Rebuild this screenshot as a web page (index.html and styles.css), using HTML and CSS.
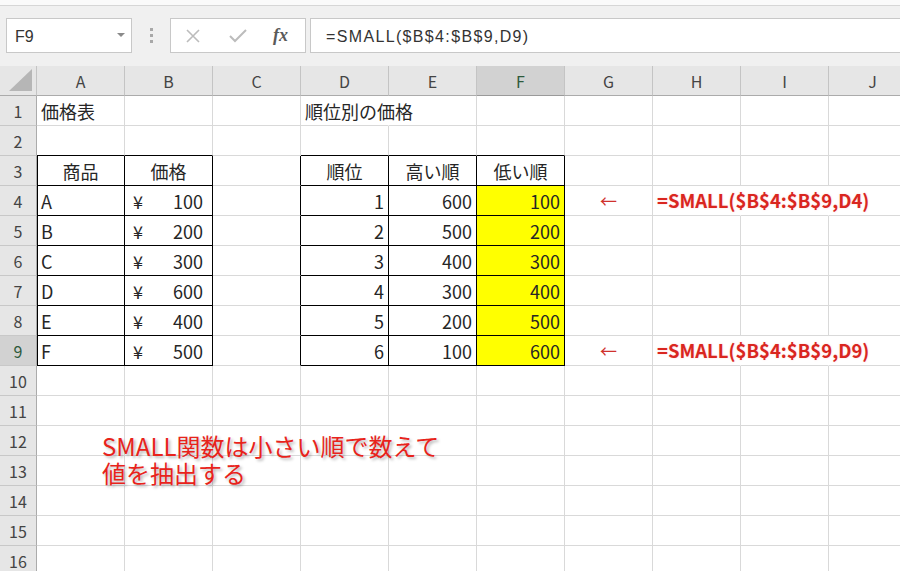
FILE: index.html
```html
<!DOCTYPE html>
<html lang="ja">
<head>
<meta charset="utf-8">
<title>SMALL関数</title>
<link rel="stylesheet" href="styles.css">
</head>
<body>
<div class="strip"></div>
<div class="toolbar">
  <div class="namebox"><span>F9</span><svg class="dd" width="8" height="5" viewBox="0 0 8 5"><path d="M0 0h8L4 4z" fill="#8a8a8a"/></svg></div>
  <div class="dots"><i></i><i></i><i></i></div>
  <div class="fbtns">
    <svg class="ico" width="16" height="14" viewBox="0 0 16 14"><path d="M2 1l12 12M14 1L2 13" stroke="#bcbcbc" stroke-width="1.6" fill="none"/></svg>
    <svg class="ico" width="18" height="14" viewBox="0 0 18 14"><path d="M1 7l5 5L17 1" stroke="#bcbcbc" stroke-width="2" fill="none"/></svg>
    <span class="fx">fx</span>
  </div>
  <div class="formula">=SMALL($B$4:$B$9,D9)</div>
</div>

<div class="sheet">
  <div class="r hdr">
    <div class="corner"><svg width="24" height="23" viewBox="0 0 24 23"><path d="M23 0V22H0z" fill="#b6b6b6"/></svg></div>
    <div class="hc">A</div><div class="hc">B</div><div class="hc">C</div><div class="hc">D</div><div class="hc">E</div><div class="hc sel">F</div><div class="hc">G</div><div class="hc">H</div><div class="hc">I</div><div class="hc">J</div>
  </div>
  <div class="r">
    <div class="rh">1</div>
    <div class="c">価格表</div><div class="c"></div><div class="c"></div><div class="c nr">順位別の価格</div><div class="c"></div><div class="c"></div><div class="c"></div><div class="c"></div><div class="c"></div><div class="c"></div>
  </div>
  <div class="r">
    <div class="rh">2</div>
    <div class="c bb"></div><div class="c bb"></div><div class="c"></div><div class="c bb"></div><div class="c bb"></div><div class="c bb"></div><div class="c"></div><div class="c"></div><div class="c"></div><div class="c"></div>
  </div>
  <div class="r">
    <div class="rh">3</div>
    <div class="c t tl ctr">商品</div><div class="c t ctr">価格</div><div class="c br"></div><div class="c t ctr">順位</div><div class="c t ctr">高い順</div><div class="c t ctr">低い順</div><div class="c"></div><div class="c"></div><div class="c"></div><div class="c"></div>
  </div>
  <div class="r">
    <div class="rh">4</div>
    <div class="c t tl">A</div><div class="c t yen"><span>¥</span><span>100</span></div><div class="c br"></div><div class="c t num">1</div><div class="c t num">600</div><div class="c t num yel">100</div><div class="c ctr arrow">←</div><div class="c nr red">=SMALL($B$4:$B$9,D4)</div><div class="c nr"></div><div class="c"></div>
  </div>
  <div class="r">
    <div class="rh">5</div>
    <div class="c t tl">B</div><div class="c t yen"><span>¥</span><span>200</span></div><div class="c br"></div><div class="c t num">2</div><div class="c t num">500</div><div class="c t num yel">200</div><div class="c"></div><div class="c"></div><div class="c"></div><div class="c"></div>
  </div>
  <div class="r">
    <div class="rh">6</div>
    <div class="c t tl">C</div><div class="c t yen"><span>¥</span><span>300</span></div><div class="c br"></div><div class="c t num">3</div><div class="c t num">400</div><div class="c t num yel">300</div><div class="c"></div><div class="c"></div><div class="c"></div><div class="c"></div>
  </div>
  <div class="r">
    <div class="rh">7</div>
    <div class="c t tl">D</div><div class="c t yen"><span>¥</span><span>600</span></div><div class="c br"></div><div class="c t num">4</div><div class="c t num">300</div><div class="c t num yel">400</div><div class="c"></div><div class="c"></div><div class="c"></div><div class="c"></div>
  </div>
  <div class="r">
    <div class="rh">8</div>
    <div class="c t tl">E</div><div class="c t yen"><span>¥</span><span>400</span></div><div class="c br"></div><div class="c t num">5</div><div class="c t num">200</div><div class="c t num yel">500</div><div class="c"></div><div class="c"></div><div class="c"></div><div class="c"></div>
  </div>
  <div class="r">
    <div class="rh sel">9</div>
    <div class="c t tl">F</div><div class="c t yen"><span>¥</span><span>500</span></div><div class="c br"></div><div class="c t num">6</div><div class="c t num">100</div><div class="c t num yel">600</div><div class="c ctr arrow">←</div><div class="c nr red">=SMALL($B$4:$B$9,D9)</div><div class="c nr"></div><div class="c"></div>
  </div>
  <div class="r"><div class="rh">10</div><div class="c"></div><div class="c"></div><div class="c"></div><div class="c"></div><div class="c"></div><div class="c"></div><div class="c"></div><div class="c"></div><div class="c"></div><div class="c"></div></div>
  <div class="r"><div class="rh">11</div><div class="c"></div><div class="c"></div><div class="c"></div><div class="c"></div><div class="c"></div><div class="c"></div><div class="c"></div><div class="c"></div><div class="c"></div><div class="c"></div></div>
  <div class="r"><div class="rh">12</div><div class="c"></div><div class="c"></div><div class="c"></div><div class="c"></div><div class="c"></div><div class="c"></div><div class="c"></div><div class="c"></div><div class="c"></div><div class="c"></div></div>
  <div class="r"><div class="rh">13</div><div class="c"></div><div class="c"></div><div class="c"></div><div class="c"></div><div class="c"></div><div class="c"></div><div class="c"></div><div class="c"></div><div class="c"></div><div class="c"></div></div>
  <div class="r"><div class="rh">14</div><div class="c"></div><div class="c"></div><div class="c"></div><div class="c"></div><div class="c"></div><div class="c"></div><div class="c"></div><div class="c"></div><div class="c"></div><div class="c"></div></div>
  <div class="r"><div class="rh">15</div><div class="c"></div><div class="c"></div><div class="c"></div><div class="c"></div><div class="c"></div><div class="c"></div><div class="c"></div><div class="c"></div><div class="c"></div><div class="c"></div></div>
  <div class="r"><div class="rh">16</div><div class="c"></div><div class="c"></div><div class="c"></div><div class="c"></div><div class="c"></div><div class="c"></div><div class="c"></div><div class="c"></div><div class="c"></div><div class="c"></div></div>

  <div class="note">SMALL関数は小さい順で数えて<br>値を抽出する</div>
</div>
</body>
</html>
```

FILE: styles.css
```css
html, body {
  margin: 0;
  padding: 0;
}
body {
  width: 900px;
  height: 571px;
  overflow: hidden;
  background: #fff;
  font-family: "Noto Sans CJK JP", "Liberation Sans", sans-serif;
  color: #222;
}
.strip {
  height: 5px;
  background: #fafafa;
  border-bottom: 1px solid #d6d6d6;
}
.toolbar {
  height: 60px;
  box-sizing: border-box;
  padding-top: 12px;
  background: #f0f0f0;
  display: flex;
  align-items: flex-start;
}
.namebox {
  margin-left: 6px;
  width: 126px;
  height: 35px;
  box-sizing: border-box;
  border: 1px solid #c8c8c8;
  background: #fff;
  display: flex;
  align-items: center;
  justify-content: space-between;
  padding: 0 6px 0 8px;
  font-family: "Liberation Sans", sans-serif;
  font-size: 16px;
  color: #333;
}
.namebox span { padding-top: 2px; }
.dots {
  margin-left: 16px;
  width: 6px;
  height: 35px;
  display: flex;
  flex-direction: column;
  align-items: center;
  justify-content: center;
  gap: 3px;
}
.dots i {
  display: block;
  width: 3px;
  height: 3px;
  background: #a8a8a8;
}
.fbtns {
  margin-left: 16px;
  width: 136px;
  height: 35px;
  box-sizing: border-box;
  border: 1px solid #c8c8c8;
  background: #fff;
  display: flex;
  align-items: center;
  padding-left: 14px;
  gap: 28px;
}
.ico { display: block; }
.fx {
  font-family: "Liberation Serif", serif;
  font-style: italic;
  font-weight: bold;
  font-size: 18px;
  color: #5a5a5a;
  margin-left: -2px;
}
.formula {
  margin-left: 4px;
  flex: 1;
  height: 35px;
  box-sizing: border-box;
  border: 1px solid #c8c8c8;
  border-right: none;
  background: #fff;
  display: flex;
  align-items: center;
  padding: 2px 0 0 15px;
  font-family: "Liberation Sans", sans-serif;
  font-size: 16px;
  letter-spacing: 1.35px;
  color: #333;
}

.sheet {
  position: relative;
}
.r {
  display: grid;
  grid-template-columns: 37px repeat(10, 88px);
  height: 30px;
}
.corner {
  background: #e6e6e6;
  border-right: 1px solid #c4c4c4;
  border-bottom: 1px solid #ababab;
  box-sizing: border-box;
  display: flex;
  align-items: flex-end;
  justify-content: flex-end;
  padding: 0 3px 3px 0;
}
.corner svg { display: block; }
.hc {
  background: #e6e6e6;
  border-right: 1px solid #c4c4c4;
  border-bottom: 1px solid #ababab;
  box-sizing: border-box;
  display: flex;
  align-items: center;
  justify-content: center;
  font-size: 16px;
  color: #444;
  padding-top: 1px;
}
.hc.sel {
  background: #d2d2d2;
  color: #2e5a3c;
  border-bottom-color: #9a9a9a;
}
.rh {
  background: #e6e6e6;
  border-right: 1px solid #ababab;
  border-bottom: 1px solid #c8c8c8;
  box-sizing: border-box;
  display: flex;
  align-items: center;
  justify-content: center;
  font-size: 16px;
  color: #444;
}
.rh.sel {
  background: #d2d2d2;
  color: #2e5a3c;
}
.c {
  border-right: 1px solid #d9d9d9;
  border-bottom: 1px solid #d9d9d9;
  box-sizing: border-box;
  display: flex;
  align-items: center;
  padding: 0 4px;
  white-space: nowrap;
  font-size: 18px;
  line-height: 1;
  color: #262626;
}
.c.nr { border-right-color: transparent; }
.c.bb { border-bottom-color: #000; }
.c.br { border-right-color: #000; }
.c.t {
  border-right-color: #000;
  border-bottom-color: #000;
}
.c.tl { box-shadow: inset 1px 0 0 #000; padding-left: 4px; }
.c.ctr { justify-content: center; }
.c.num { justify-content: flex-end; }
.c.yen {
  justify-content: space-between;
  padding: 0 9px 0 8px;
}
.c.yel { background: #ffff00; }
.c.arrow {
  color: #d0312d;
  font-size: 17px;
}
.c.red {
  color: #d9261f;
  font-weight: bold;
  font-size: 18.5px;
  text-shadow: 0 0 2px rgba(255, 120, 120, 0.35);
}
.note {
  position: absolute;
  left: 102px;
  top: 366px;
  font-size: 24px;
  line-height: 27px;
  color: #e8231b;
  white-space: nowrap;
  text-shadow: 2px 2px 3px rgba(0, 0, 0, 0.28);
}
```
